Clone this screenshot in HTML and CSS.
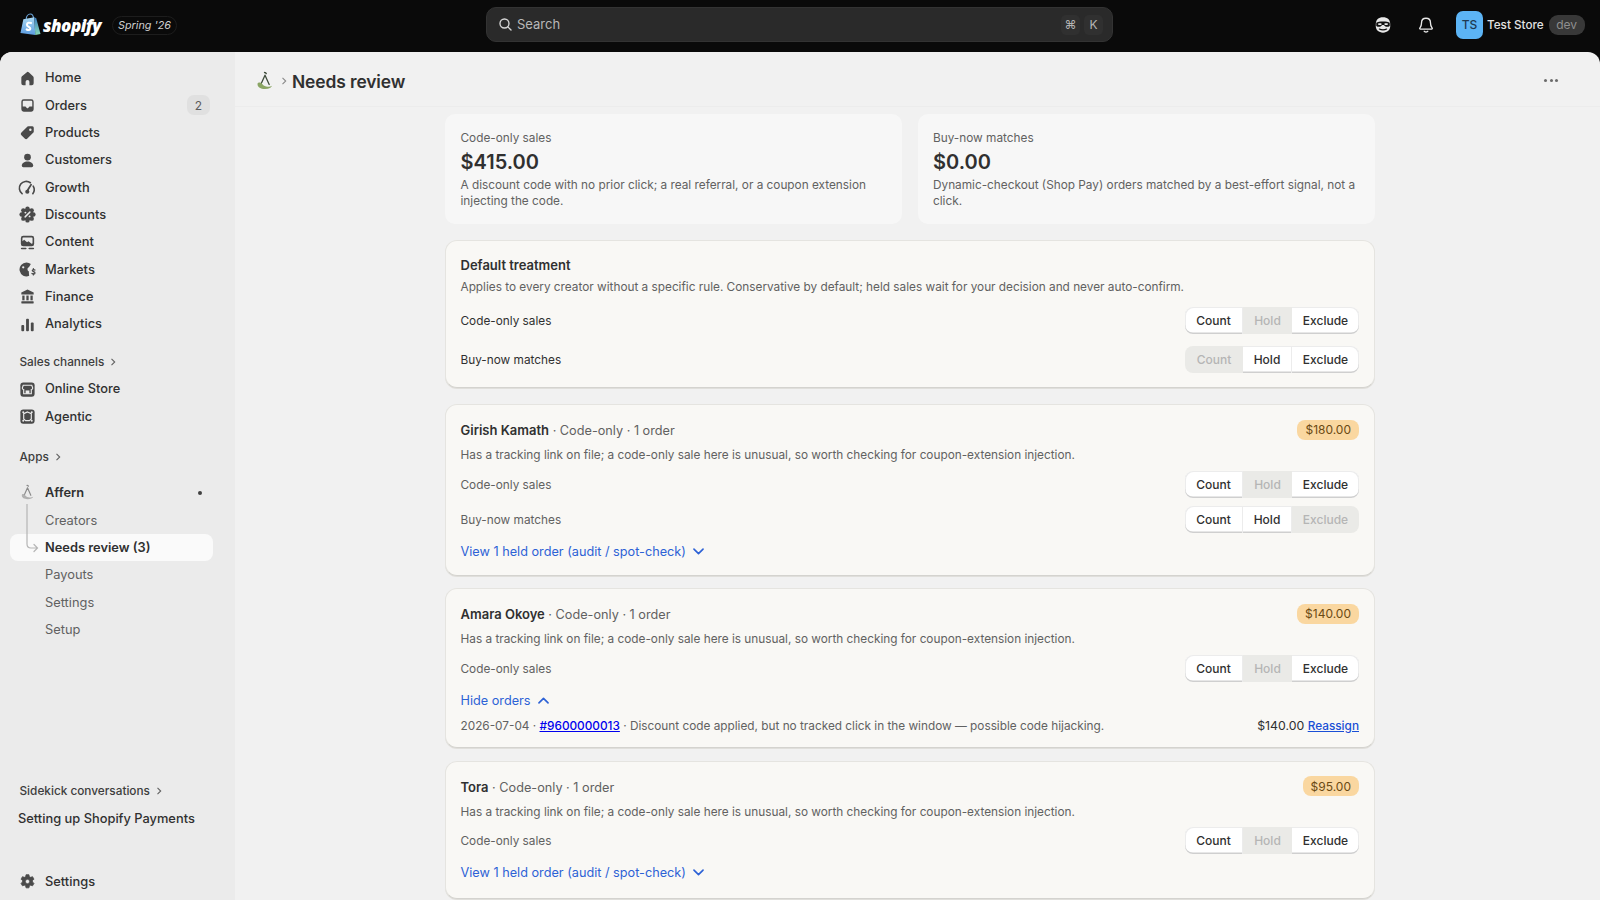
FILE: index.html
```html
<!DOCTYPE html>
<html lang="en">
<head>
<meta charset="utf-8">
<title>Needs review</title>
<link rel="stylesheet" href="styles.css">
</head>
<body>
<header class="topbar">
  <div class="brand">
    <svg class="bag" viewBox="0 0 22 24" width="21" height="23">
      <defs>
        <linearGradient id="bagL" x1="0" y1="0" x2="0" y2="1"><stop offset="0" stop-color="#a9d8f2"/><stop offset="1" stop-color="#5b9be0"/></linearGradient>
        <linearGradient id="bagR" x1="0" y1="0" x2="0" y2="1"><stop offset="0" stop-color="#3d7fc4"/><stop offset="1" stop-color="#86d8b6"/></linearGradient>
      </defs>
      <path d="M6.500 6.500C6.600 3.400 8.400 1 10.800 1c1.800 0 3.200 1.800 3.500 5" fill="none" stroke="#6ba4d8" stroke-width="1.200"/>
      <path d="M3.500 6.500 15 4.500 16 23 .5 21z" fill="url(#bagL)"/>
      <path d="M15 4.500 17 5.500 21.500 22 16 23z" fill="url(#bagR)"/>
      <path d="M11.500 10.500C10 9.800 7.300 10 7.300 12.200c0 2.300 3.500 2.400 3.500 4.300 0 1.600-2.200 1.600-3.800.7" fill="none" stroke="#fff" stroke-width="2.200" stroke-linecap="round"/>
    </svg>
    <span class="wordmark">shopify</span>
    <span class="season">Spring '26</span>
  </div>
  <div class="search">
    <svg viewBox="0 0 20 20" width="17" height="17" class="search-ico"><circle cx="8.800" cy="8.800" r="5.300" fill="none" stroke="#d6d6d6" stroke-width="1.600"/><path d="m12.800 12.800 3.700 3.700" stroke="#d6d6d6" stroke-width="1.600" stroke-linecap="round"/></svg>
    <span class="search-text">Search</span>
    <span class="kbd">⌘</span>
    <span class="kbd">K</span>
  </div>
  <div class="top-right">
    <svg class="face" viewBox="0 0 20 20" width="18" height="18">
      <path d="M10 1.500c5 0 8 2.800 8 7.500v2.500c0 4.200-3.200 7-8 7s-8-2.800-8-7V9c0-4.700 3-7.500 8-7.500z" fill="#e8e8e8"/>
      <path d="M2.500 7.500C5 5.500 15 5.500 17.500 7.500v3.500c-2 1.500-5 1.300-6-.5-.6-.6-2.400-.6-3 0-1 1.800-4 2-6 .5z" fill="#111"/>
      <rect x="4.500" y="8" width="4" height="2" rx="1" fill="#e8e8e8"/><rect x="11.500" y="8" width="4" height="2" rx="1" fill="#e8e8e8"/>
      <path d="M6 14.500c2 1.200 6 1.200 8 0" stroke="#111" stroke-width="1.400" fill="none" stroke-linecap="round"/>
    </svg>
    <svg class="bell" viewBox="0 0 20 20" width="18" height="18">
      <path d="M10 2.500c-3 0-5 2.200-5 5.200 0 3.800-1.200 4.700-1.900 5.800-.3.500 0 1 .6 1h12.600c.6 0 .9-.5.600-1-.7-1.100-1.900-2-1.900-5.800 0-3-2-5.200-5-5.200z" fill="none" stroke="#e8e8e8" stroke-width="1.500"/>
      <path d="M8 17c.4 1 3.600 1 4 0" stroke="#e8e8e8" stroke-width="1.500" fill="none" stroke-linecap="round"/>
    </svg>
    <span class="avatar">TS</span>
    <span class="store">Test Store</span>
    <span class="dev">dev</span>
  </div>
</header>

<div class="shell">
  <nav class="sidebar">
    <div class="nav-group">
      <a class="nav-row"><svg class="ico" viewBox="0 0 20 20"><path d="M10 3 4.200 7.600A2 2 0 0 0 3.500 9.200V15a2 2 0 0 0 2 2H8v-3.500a2 2 0 0 1 4 0V17h2.500a2 2 0 0 0 2-2V9.200a2 2 0 0 0-.7-1.600L11.300 3.500A2 2 0 0 0 10 3z"/></svg>Home</a>
      <a class="nav-row"><svg class="ico" viewBox="0 0 20 20"><path fill-rule="evenodd" d="M6 3.500h8A2.500 2.500 0 0 1 16.500 6v8a2.500 2.500 0 0 1-2.500 2.500H6A2.500 2.500 0 0 1 3.500 14V6A2.500 2.500 0 0 1 6 3.500zM5 6v5h2.500c.6 0 1 .4 1.200.9.200.6.700 1.100 1.300 1.100s1.100-.5 1.300-1.100c.2-.5.6-.9 1.200-.9H15V6a1 1 0 0 0-1-1H6a1 1 0 0 0-1 1z"/></svg>Orders<span class="count">2</span></a>
      <a class="nav-row"><svg class="ico" viewBox="0 0 20 20"><path fill-rule="evenodd" d="M3.600 10 10 3.800a1.500 1.500 0 0 1 1-.4h4.100A1.500 1.500 0 0 1 16.600 5v4.100a1.500 1.500 0 0 1-.4 1l-6.300 6.300a2 2 0 0 1-2.800 0l-3.500-3.500a2 2 0 0 1 0-2.900zM13 8.300a1.300 1.300 0 1 0 0-2.600 1.300 1.300 0 0 0 0 2.600z"/></svg>Products</a>
      <a class="nav-row"><svg class="ico" viewBox="0 0 20 20"><circle cx="10" cy="6.500" r="3.500"/><path d="M4 15.500c0-2.800 2.600-4.500 6-4.500s6 1.700 6 4.500a1.500 1.500 0 0 1-1.500 1.500h-9A1.500 1.500 0 0 1 4 15.500z"/></svg>Customers</a>
      <a class="nav-row"><svg class="ico" viewBox="0 0 20 20"><path d="M4.300 16.500A7.200 7.200 0 0 1 13 5" fill="none" stroke="#4a4a4a" stroke-width="1.700" stroke-linecap="round"/><path d="M16 8.500a7.200 7.200 0 0 1-.4 8" fill="none" stroke="#4a4a4a" stroke-width="1.700" stroke-linecap="round"/><circle cx="9.800" cy="14.500" r="2.200"/><path d="m9.800 13.500 4-6.500" stroke="#4a4a4a" stroke-width="1.900" stroke-linecap="round"/></svg>Growth</a>
      <a class="nav-row"><svg class="ico" viewBox="0 0 20 20"><circle cx="10" cy="10" r="6.300"/><g><circle cx="10" cy="3.800" r="2.300"/><circle cx="10" cy="16.200" r="2.300"/><circle cx="3.800" cy="10" r="2.300"/><circle cx="16.200" cy="10" r="2.300"/><circle cx="5.600" cy="5.600" r="2.300"/><circle cx="14.400" cy="5.600" r="2.300"/><circle cx="5.600" cy="14.400" r="2.300"/><circle cx="14.400" cy="14.400" r="2.300"/></g><path d="m7.500 12.500 5-5" stroke="#ebebeb" stroke-width="1.500" stroke-linecap="round"/><circle cx="7.800" cy="8" r="1" fill="#ebebeb"/><circle cx="12.200" cy="12" r="1" fill="#ebebeb"/></svg>Discounts</a>
      <a class="nav-row"><svg class="ico" viewBox="0 0 20 20"><path fill-rule="evenodd" d="M5.500 3h9A2.500 2.500 0 0 1 17 5.500v6a2.500 2.500 0 0 1-2.500 2.500h-9A2.500 2.500 0 0 1 3 11.500v-6A2.500 2.500 0 0 1 5.500 3zm0 1.700a.8.800 0 0 0-.8.800v3.300l1.800-1.600 3 2.600 1.500-1 3.300 2.500h.2a.8.800 0 0 0 .8-.8V5.500a.8.800 0 0 0-.8-.8z"/><rect x="3" y="15.500" width="6" height="1.700" rx=".8"/><rect x="11" y="15.500" width="6" height="1.700" rx=".8"/></svg>Content</a>
      <a class="nav-row"><svg class="ico" viewBox="0 0 20 20"><path fill-rule="evenodd" d="M9 2.700a7.200 7.200 0 0 1 4.500 1.600l-2 3.300c-1 .4-1.500 1.100-1.500 2.100 0 1.300.7 2 1.600 2.500-.3.800-.1 2.300.2 4.500A7.300 7.300 0 1 1 9 2.700zM5.500 6.500a1.200 1.200 0 1 0 0 2.400 1.200 1.200 0 0 0 0-2.400z"/><path d="M17.800 10.500c-.6-.6-2.600-.8-2.800.5-.2 1.500 3 1 2.900 2.700-.1 1.400-2.300 1.300-3.200.5M16.200 9v1.300m0 4v1.400" fill="none" stroke="#4a4a4a" stroke-width="1.300" stroke-linecap="round"/></svg>Markets</a>
      <a class="nav-row"><svg class="ico" viewBox="0 0 20 20"><path d="M10 2.500 3.500 5.800V8h13V5.800z"/><rect x="4.500" y="9" width="2.400" height="5"/><rect x="8.800" y="9" width="2.400" height="5"/><rect x="13.100" y="9" width="2.400" height="5"/><rect x="3.500" y="15" width="13" height="2.300" rx=".5"/></svg>Finance</a>
      <a class="nav-row"><svg class="ico" viewBox="0 0 20 20"><rect x="3.500" y="10.500" width="3" height="6.500" rx="1"/><rect x="8.500" y="4" width="3" height="13" rx="1"/><rect x="13.500" y="8" width="3" height="9" rx="1"/></svg>Analytics</a>
    </div>
    <div class="section-label sales">Sales channels<svg class="chev" viewBox="0 0 10 10"><path d="m3.500 1.800 3.200 3.200-3.200 3.200"/></svg></div>
    <div class="nav-group">
      <a class="nav-row"><svg class="ico" viewBox="0 0 20 20"><rect x="2.500" y="2.500" width="15" height="15" rx="3"/><path d="M5.500 5.500h9l1 3c0 1-.8 1.500-1.500 1.500V14.500H6V10c-.7 0-1.500-.5-1.500-1.500z" fill="none" stroke="#ebebeb" stroke-width="1.200"/><rect x="8" y="11" width="4" height="3.500" fill="#ebebeb"/></svg>Online Store</a>
      <a class="nav-row"><svg class="ico" viewBox="0 0 20 20"><rect x="2.500" y="2.500" width="15" height="15" rx="3"/><path d="M10 5.200 14 7v5.500l-2 1.800H8l-2-1.800V7z" fill="none" stroke="#ebebeb" stroke-width="1.200"/><circle cx="5.500" cy="14.500" r="1" fill="#ebebeb"/><circle cx="14.500" cy="14.500" r="1" fill="#ebebeb"/><circle cx="5.500" cy="5.500" r="1" fill="#ebebeb"/><circle cx="14.500" cy="5.500" r="1" fill="#ebebeb"/></svg>Agentic</a>
    </div>
    <div class="section-label apps">Apps<svg class="chev" viewBox="0 0 10 10"><path d="m3.500 1.800 3.200 3.200-3.200 3.200"/></svg></div>
    <div class="nav-group app-group">
      <svg class="connector" viewBox="0 0 14 50" width="14" height="50"><path d="M1 0v40q0 4 4 4h6.500m-3.500-3.500 3.500 3.500-3.500 3.500" fill="none" stroke="#b5b5b5" stroke-width="1.200" stroke-linecap="round"/></svg>
      <a class="nav-row strong"><svg class="ico" viewBox="0 0 20 20"><path d="M9.500 2.500c.8 0 1.300.4 1.500.9M10 5 6.500 13M10 5l3.500 8" fill="none" stroke="#8a8a8a" stroke-width="1.200" stroke-linecap="round"/><path d="M4 13c0 2.800 2.600 4 6 4s5.500-1 6-2.500c-2 1-6.500 1.500-8.500-1.500C6 11 4 11.500 4 13z" fill="#b0b0b0"/></svg>Affern<span class="dot"></span></a>
      <a class="nav-row sub first">Creators</a>
      <a class="nav-row sub selected">Needs review (3)</a>
      <a class="nav-row sub">Payouts</a>
      <a class="nav-row sub">Settings</a>
      <a class="nav-row sub">Setup</a>
    </div>
    <div class="sidebar-end">
      <div class="section-label">Sidekick conversations<svg class="chev" viewBox="0 0 10 10"><path d="m3.500 1.800 3.200 3.200-3.200 3.200"/></svg></div>
      <a class="nav-row convo">Setting up Shopify Payments</a>
      <a class="nav-row settings"><svg class="ico" viewBox="0 0 20 20"><path fill-rule="evenodd" d="M8.500 2.800h3l.5 2.100 1.300.7 2-.7 1.500 2.600-1.500 1.500v1.500l1.500 1.500-1.500 2.600-2-.7-1.300.7-.5 2.100h-3l-.5-2.100-1.300-.7-2 .7-1.500-2.600 1.500-1.500V9L3.200 7.500l1.500-2.600 2 .7L8 4.900zM10 12.300a2.300 2.300 0 1 0 0-4.600 2.300 2.300 0 0 0 0 4.600z" stroke="#4a4a4a" stroke-width=".8" stroke-linejoin="round"/></svg>Settings</a>
    </div>
  </nav>

  <main class="main">
    <div class="page-head">
      <svg class="app-logo" viewBox="0 0 20 20" width="20" height="20"><path d="M9.500 1.500c1 0 1.600.5 1.800 1.200M10 4.300 5.800 13.500M10 4.300 14.200 13.500" fill="none" stroke="#3d4a3a" stroke-width="1.300" stroke-linecap="round"/><path d="M2.500 13c0 3.300 3.200 5 7.500 5s6.500-1.400 7-3.300c-2.500 1.300-7.500 1.800-9.800-1.700C6 11 2.500 11 2.500 13z" fill="#8aa564"/></svg>
      <svg class="crumb" viewBox="0 0 10 10" width="10" height="10"><path d="m3.500 1.800 3.200 3.200-3.200 3.200" fill="none" stroke="#8a8a8a" stroke-width="1.100"/></svg>
      <h1>Needs review</h1>
      <span class="more"><i></i><i></i><i></i></span>
    </div>
    <div class="content">
      <div class="stats">
        <section class="stat">
          <div class="stat-label">Code-only sales</div>
          <div class="stat-num">$415.00</div>
          <p class="stat-desc">A discount code with no prior click; a real referral, or a coupon extension injecting the code.</p>
        </section>
        <section class="stat">
          <div class="stat-label">Buy-now matches</div>
          <div class="stat-num">$0.00</div>
          <p class="stat-desc">Dynamic-checkout (Shop Pay) orders matched by a best-effort signal, not a click.</p>
        </section>
      </div>

      <section class="card default-card">
        <div class="card-title">Default treatment</div>
        <p class="muted desc-d">Applies to every creator without a specific rule. Conservative by default; held sales wait for your decision and never auto-confirm.</p>
        <div class="row dark r1">
          <span>Code-only sales</span>
          <div class="seg"><button class="b-count">Count</button><button class="b-hold off">Hold</button><button class="b-excl">Exclude</button></div>
        </div>
        <div class="row dark r2">
          <span>Buy-now matches</span>
          <div class="seg"><button class="b-count off">Count</button><button class="b-hold">Hold</button><button class="b-excl">Exclude</button></div>
        </div>
      </section>

      <section class="card creator c1">
        <div class="head"><span class="who"><b>Girish Kamath</b> · Code-only · 1 order</span><span class="amt">$180.00</span></div>
        <p class="muted desc">Has a tracking link on file; a code-only sale here is unusual, so worth checking for coupon-extension injection.</p>
        <div class="row r1">
          <span>Code-only sales</span>
          <div class="seg"><button class="b-count">Count</button><button class="b-hold off">Hold</button><button class="b-excl">Exclude</button></div>
        </div>
        <div class="row r3">
          <span>Buy-now matches</span>
          <div class="seg"><button class="b-count">Count</button><button class="b-hold">Hold</button><button class="b-excl off">Exclude</button></div>
        </div>
        <div class="toggle t-a">View 1 held order (audit / spot-check)<svg viewBox="0 0 12 12" width="13" height="13"><path d="m1.800 3.800 4.200 4.200 4.200-4.200"/></svg></div>
      </section>

      <section class="card creator c2">
        <div class="head"><span class="who"><b>Amara Okoye</b> · Code-only · 1 order</span><span class="amt">$140.00</span></div>
        <p class="muted desc">Has a tracking link on file; a code-only sale here is unusual, so worth checking for coupon-extension injection.</p>
        <div class="row r1">
          <span>Code-only sales</span>
          <div class="seg"><button class="b-count">Count</button><button class="b-hold off">Hold</button><button class="b-excl">Exclude</button></div>
        </div>
        <div class="toggle t-b">Hide orders<svg viewBox="0 0 12 12" width="13" height="13"><path d="m1.800 8.200 4.200-4.200 4.200 4.200"/></svg></div>
        <div class="order">
          <span class="muted">2026-07-04 · <a class="order-link" href="#">#9600000013</a> · Discount code applied, but no tracked click in the window — possible code hijacking.</span>
          <span class="order-end">$140.00 <a class="reassign" href="#">Reassign</a></span>
        </div>
      </section>

      <section class="card creator c3">
        <div class="head"><span class="who"><b>Tora</b> · Code-only · 1 order</span><span class="amt">$95.00</span></div>
        <p class="muted desc">Has a tracking link on file; a code-only sale here is unusual, so worth checking for coupon-extension injection.</p>
        <div class="row r1">
          <span>Code-only sales</span>
          <div class="seg"><button class="b-count">Count</button><button class="b-hold off">Hold</button><button class="b-excl">Exclude</button></div>
        </div>
        <div class="toggle t-a">View 1 held order (audit / spot-check)<svg viewBox="0 0 12 12" width="13" height="13"><path d="m1.800 3.800 4.200 4.200 4.200-4.200"/></svg></div>
      </section>
    </div>
  </main>
</div>
</body>
</html>
```
FILE: styles.css
```css
* { box-sizing: border-box; }
html, body { margin: 0; height: 100%; overflow: hidden; }
body {
  background: #0a0a0a;
  font-family: Inter, "Liberation Sans", sans-serif;
  font-size: 13px;
  color: #303030;
  display: flex;
  flex-direction: column;
}
p, h1 { margin: 0; }

/* top bar */
.topbar {
  height: 52px;
  flex: none;
  display: grid;
  grid-template-columns: 486px 627px 1fr;
  align-items: center;
}
.brand { display: flex; align-items: center; padding-left: 20px; }
.bag { flex: none; margin-top: -3px; }
.wordmark {
  margin-left: 2px;
  font-family: "Open Sans", sans-serif;
  font-weight: 800;
  font-style: italic;
  font-size: 17px;
  letter-spacing: -.5px;
  color: #fff;
  width: 66px;
  margin-top: -2px;
}
.season {
  margin-left: 3px;
  height: 19px;
  padding: 0 5px;
  border: 1px solid #1d1d1d;
  border-radius: 10px;
  display: flex;
  align-items: center;
  font-style: italic;
  font-size: 10.800px;
  color: #d0d0d0;
  margin-top: -1px;
}
.search {
  height: 35px;
  margin-top: -3px;
  background: #2a2a2a;
  border: 1px solid #333;
  border-radius: 10px;
  display: flex;
  align-items: center;
  gap: 4px;
  padding: 0 9px 0 10px;
  color: #b8b8b8;
}
.search-ico { margin-right: -1px; flex: none; }
.search-text { flex: 1; font-size: 13px; margin-top: -1px; }
.kbd {
  width: 19px;
  height: 20px;
  background: #303030;
  border-radius: 5px;
  color: #b5b5b5;
  font-size: 12px;
  display: flex;
  align-items: center;
  justify-content: center;
}
.top-right { display: flex; align-items: center; margin-top: -3px; color: #e3e3e3; }
.face { margin-left: 261px; }
.bell { margin-left: 25px; }
.avatar {
  margin-left: 21px;
  width: 27px;
  height: 28px;
  border-radius: 7px;
  background: #5cb4f5;
  color: #1f3a52;
  font-size: 12px;
  font-weight: 500;
  display: flex;
  align-items: center;
  justify-content: center;
}
.store { margin-left: 4px; font-weight: 500; font-size: 11.700px; }
.dev {
  margin-left: 5px;
  width: 36px;
  height: 20px;
  border-radius: 9px;
  background: #383838;
  color: #8f8f8f;
  font-size: 12px;
  display: flex;
  align-items: center;
  justify-content: center;
}

/* shell */
.shell {
  flex: 1;
  min-height: 0;
  display: flex;
  border-radius: 12px 12px 0 0;
  overflow: hidden;
  background: #f1f1f1;
}
.sidebar {
  width: 235px;
  flex: none;
  background: #ebebeb;
  padding: 12.200px 0 5px;
  display: flex;
  flex-direction: column;
  color: #303030;
}
.nav-group { display: flex; flex-direction: column; position: relative; }
.nav-row {
  height: 27.330px;
  flex: none;
  display: flex;
  align-items: center;
  padding-left: 45px;
  font-size: 12.850px;
  font-weight: 500;
  position: relative;
  color: #303030;
}
.ico {
  position: absolute;
  left: 18px;
  top: 4.500px;
  width: 19px;
  height: 19px;
  fill: #4a4a4a;
}
.count {
  position: absolute;
  left: 187px;
  top: 3.500px;
  width: 23px;
  height: 20px;
  border-radius: 7px;
  background: #e0e0e0;
  color: #5c5c5c;
  font-weight: 400;
  font-size: 12px;
  display: flex;
  align-items: center;
  justify-content: center;
}
.section-label {
  height: 27.330px;
  flex: none;
  display: flex;
  align-items: center;
  padding-left: 19.500px;
  font-size: 11.800px;
  font-weight: 500;
  color: #3d3d3d;
}
.sales { margin-top: 10.500px; }
.apps { margin-top: 13.700px; margin-bottom: 7.700px; }
.chev { width: 10px; height: 10px; margin-left: 4px; fill: none; stroke: #616161; stroke-width: 1.100; }
.connector { position: absolute; left: 26px; top: 25px; z-index: 2; }
.strong { font-weight: 600; }
.dot {
  position: absolute;
  left: 198px;
  top: 12.500px;
  width: 4px;
  height: 4px;
  border-radius: 50%;
  background: #404040;
}
.sub { color: #616161; font-weight: 400; }
.first { margin-top: .7px; }
.selected {
  margin: 0 22px 0 10px;
  padding-left: 35px;
  background: #fafafa;
  border-radius: 8px;
  color: #303030;
  font-weight: 600;
}
.sidebar-end { margin-top: auto; display: flex; flex-direction: column; }
.convo { padding-left: 18px; }
.settings { margin-top: 35.600px; }

/* main */
.main { flex: 1; min-width: 0; display: flex; flex-direction: column; min-height: 0; }
.page-head {
  height: 55px;
  flex: none;
  border-bottom: 1px solid #ececec;
  display: flex;
  align-items: center;
  padding: 4px 0 0 20px;
  position: relative;
}
.app-logo { flex: none; }
.crumb { margin-left: 4px; flex: none; }
h1 { margin-left: 3px; font-size: 17.400px; font-weight: 600; color: #303030; letter-spacing: -.1px; }
.more { position: absolute; left: 1309px; top: 27px; display: flex; gap: 2.500px; }
.more i { width: 3px; height: 3px; border-radius: 50%; background: #6b6b6b; display: block; }
.content { padding: 7px 0 0 210px; width: 1140px; flex: 1; min-height: 0; }

.stats { display: grid; grid-template-columns: 457px 457.500px; gap: 15.500px; margin-bottom: 16px; width: 930px; }
.stat {
  height: 110px;
  background: #f7f7f7;
  border-radius: 10px;
  padding: 16px 15.500px 0;
}
.stat-label { color: #616161; line-height: 16px; font-size: 11.800px; }
.stat-num { font-size: 20px; font-weight: 600; line-height: 24px; margin-top: 4px; color: #303030; }
.stat-desc { color: #616161; line-height: 16px; margin-top: 3px; font-size: 11.800px; }

.card {
  background: #f9f8f5;
  border: 1px solid #e5e4e0;
  border-bottom-color: #d4d3cf;
  border-radius: 12px;
  padding: 0 15px 0 14.500px;
  box-shadow: 0 1px 0 #e0dfdb;
}
.default-card { height: 148px; margin-bottom: 16px; padding-top: 15px; }
.card-title { font-weight: 600; line-height: 18px; }
.muted { color: #616161; font-size: 11.800px; }
.desc-d { line-height: 18px; margin-top: 4px; }
.row { display: flex; justify-content: space-between; align-items: center; height: 27px; color: #616161; font-size: 11.800px; }
.row.dark { color: #303030; }
.default-card .r1 { margin-top: 11px; }
.r2 { margin-top: 12px; }
.r3 { margin-top: 8px; }

.creator { margin-bottom: 12px; padding-top: 15px; }
.c2 { margin-bottom: 12.500px; }
.c1 { height: 172px; }
.c2 { height: 160px; }
.c3 { height: 138px; }
.head { display: flex; justify-content: space-between; align-items: center; height: 20px; }
.who { color: #616161; font-size: 12.700px; }
.who b { color: #303030; font-weight: 600; font-size: 13px; }
.amt {
  height: 20px;
  padding: 0 8px;
  border-radius: 8px;
  background: #fad7a0;
  color: #6b4a14;
  font-size: 12px;
  display: flex;
  align-items: center;
  margin-top: -1px;
}
.desc { line-height: 18px; margin-top: 6px; }
.creator .r1 { margin-top: 7px; }
.c3 .r1 { margin-top: 6.500px; }
.toggle {
  color: #2d62d6;
  display: flex;
  align-items: center;
  gap: 6px;
  height: 18px;
  font-size: 12.700px;
}
.toggle svg { fill: none; stroke: #2d62d6; stroke-width: 1.500; stroke-linecap: round; stroke-linejoin: round; }
.t-a { margin-top: 9.500px; }
.t-b { margin-top: 9px; }
.order { display: flex; justify-content: space-between; align-items: center; height: 18px; margin-top: 7.500px; }
.order-link { color: #0000ee; font-weight: 500; }
.order-end { color: #303030; font-size: 12.300px; }
.reassign { color: #1a4fd6; font-weight: 500; font-size: 11.800px; }

.seg { display: flex; height: 27px; border-radius: 8px; }
.seg button {
  font: 500 12px Inter, "Liberation Sans", sans-serif;
  height: 27px;
  border: 0;
  background: #fff;
  color: #303030;
  padding: 0;
  box-shadow: inset 0 -1.500px 0 #cfcfcf, inset 0 1px 0 #ececec;
  border-right: 1px solid #ececec;
}
.seg .b-count { width: 58px; border-radius: 8px 0 0 8px; box-shadow: inset 0 -1.500px 0 #cfcfcf, inset 1px 1px 0 #ececec; }
.seg .b-hold { width: 49px; }
.seg .b-excl { width: 67px; border-radius: 0 8px 8px 0; border-right: 0; box-shadow: inset 0 -1.500px 0 #cfcfcf, inset -1px 1px 0 #ececec; }
.seg button.off { background: #eaeae7; color: #b5b5b5; box-shadow: none; border-right: 0; }
```
